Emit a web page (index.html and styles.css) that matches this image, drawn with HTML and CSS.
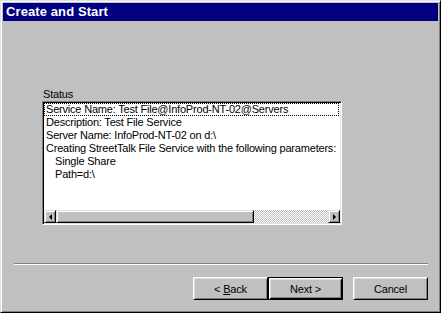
FILE: index.html
```html
<!DOCTYPE html>
<html lang="en">
<head>
    <meta charset="UTF-8">
    <title>Create and Start</title>
    <link rel="stylesheet" href="styles.css">
</head>
<body>
    <div class="window">
        <div class="title-bar">Create and Start</div>

        <div class="content">
            <div class="label">Status</div>
            <div class="listbox">
                <div class="list-items">
                    <div class="item focused">Service Name: Test File@InfoProd-NT-02@Servers</div>
                    <div class="item">Description: Test File Service</div>
                    <div class="item">Server Name: InfoProd-NT-02 on d:\</div>
                    <div class="item">Creating StreetTalk File Service with the following parameters:</div>
                    <div class="item indent">Single Share</div>
                    <div class="item indent">Path=d:\</div>
                </div>
                <div class="hscroll">
                    <div class="sb-btn"><span class="arrow left"></span></div>
                    <div class="sb-thumb"></div>
                    <div class="sb-track"></div>
                    <div class="sb-btn"><span class="arrow right"></span></div>
                </div>
            </div>
        </div>

        <div class="separator"></div>

        <div class="buttons">
            <button class="btn">&lt; <u>B</u>ack</button>
            <button class="btn btn-default">Next &gt;</button>
            <button class="btn btn-cancel">Cancel</button>
        </div>
    </div>
</body>
</html>
```

FILE: styles.css
```css
:root {
    --face: #c0c0c0;
    --shadow: #808080;
    --light: #dfdfdf;
    --highlight: #ffffff;
    --dark: #000000;
    --title: #000080;
}

* {
    margin: 0;
    padding: 0;
    box-sizing: border-box;
}

body {
    font-family: 'Liberation Sans', Arial, sans-serif;
    font-size: 11px;
    letter-spacing: -0.2px;
    color: #000;
    background: var(--face);
}

.window {
    width: 441px;
    height: 313px;
    background: var(--face);
    border: 1px solid;
    border-color: var(--light) var(--dark) var(--dark) var(--light);
    box-shadow: inset 1px 1px var(--highlight), inset -1px -1px var(--shadow);
    padding: 2px;
    display: flex;
    flex-direction: column;
}

.title-bar {
    height: 18px;
    background: var(--title);
    color: #fff;
    font-weight: bold;
    font-size: 13px;
    letter-spacing: 0.1px;
    line-height: 18px;
    padding-left: 3px;
}

.content {
    padding: 67px 0 0 39px;
}

.label {
    height: 13px;
    line-height: 13px;
    padding-left: 1px;
}

.listbox {
    width: 300px;
    height: 124px;
    background: #fff;
    border: 1px solid;
    border-color: var(--shadow) var(--highlight) var(--highlight) var(--shadow);
    box-shadow: inset 1px 1px var(--dark), inset -1px -1px var(--light);
    padding: 1px;
    display: flex;
    flex-direction: column;
}

.list-items {
    flex: 1;
    overflow: hidden;
}

.item {
    height: 13px;
    line-height: 13px;
    padding-left: 2px;
    white-space: nowrap;
}

.item.indent {
    padding-left: 11px;
}

.item.focused {
    outline: 1px dotted #000;
    outline-offset: -1px;
    margin-right: 1px;
}

.hscroll {
    height: 13px;
    display: flex;
}

.sb-btn,
.sb-thumb {
    background: var(--face);
    border: 1px solid;
    border-color: var(--light) var(--dark) var(--dark) var(--light);
    box-shadow: inset 1px 1px var(--highlight), inset -1px -1px var(--shadow);
}

.sb-btn {
    width: 12px;
    display: flex;
    align-items: center;
    justify-content: center;
}

.sb-thumb {
    width: 198px;
}

.sb-track {
    flex: 1;
    background: repeating-conic-gradient(var(--face) 0 25%, #fff 0 50%) 0 0 / 2px 2px;
}

.arrow {
    width: 0;
    height: 0;
    border-top: 3px solid transparent;
    border-bottom: 3px solid transparent;
}

.arrow.left {
    border-right: 3px solid #000;
}

.arrow.right {
    border-left: 3px solid #000;
}

.separator {
    margin: 38px 10px 0 11px;
    height: 2px;
    border-top: 1px solid var(--shadow);
    border-bottom: 1px solid var(--highlight);
}

.buttons {
    display: flex;
    justify-content: flex-end;
    padding-right: 10px;
    margin-top: 12px;
}

.btn {
    width: 75px;
    height: 23px;
    font-family: inherit;
    font-size: 11px;
    letter-spacing: -0.2px;
    background: var(--face);
    border: 1px solid;
    border-color: var(--highlight) var(--dark) var(--dark) var(--highlight);
    box-shadow: inset 1px 1px var(--light), inset -1px -1px var(--shadow);
    color: #000;
}

.btn-default {
    border: 1px solid var(--dark);
    box-shadow: inset 1px 1px var(--highlight), inset -1px -1px var(--dark), inset 2px 2px var(--light), inset -2px -2px var(--shadow);
}

.btn-cancel {
    margin-left: 10px;
}
```
